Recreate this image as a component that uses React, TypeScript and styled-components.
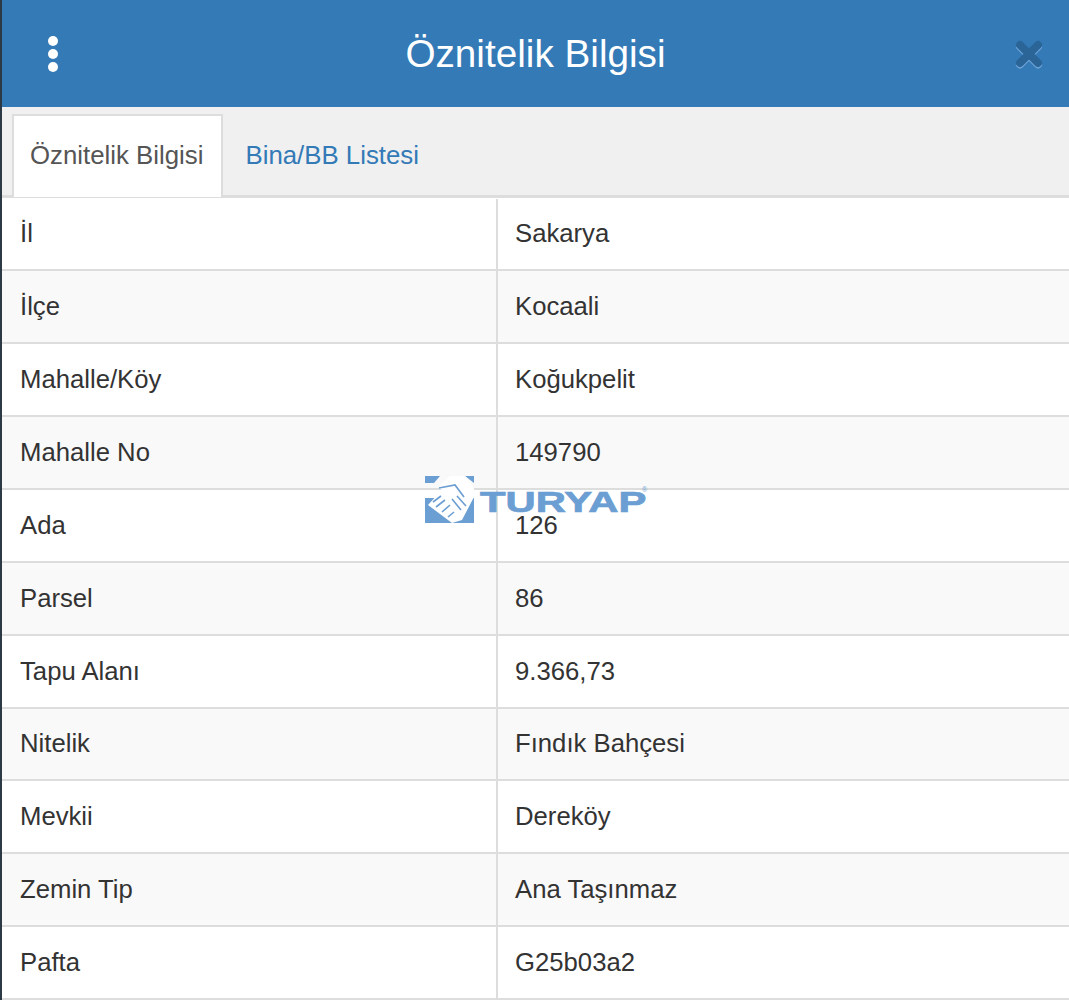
import { createGlobalStyle } from 'styled-components'
import styled from 'styled-components'

const GlobalStyle = createGlobalStyle`
  html, body {
    margin: 0;
    padding: 0;
    background: #fff;
    font-family: 'Liberation Sans', Arial, sans-serif;
  }
`

const Page = styled.div`
  position: relative;
  width: 1069px;
  height: 1000px;
  overflow: hidden;
  box-sizing: border-box;
  border-left: 2px solid #2b3a45;
`

const Header = styled.header`
  height: 107px;
  background: #337ab7;
  display: flex;
  align-items: center;
  justify-content: space-between;
  padding: 0 24px 0 46px;
`

const MenuDots = styled.div`
  display: flex;
  flex-direction: column;
  gap: 3px;
  span {
    width: 10px;
    height: 10px;
    border-radius: 50%;
    background: #fff;
  }
`

const Title = styled.h1`
  margin: 0;
  font-size: 38.7px;
  font-weight: 400;
  color: #fff;
  line-height: 107px;
`

const CloseIcon = styled.svg`
  width: 32px;
  height: 32px;
  display: block;
`

const TabBar = styled.nav`
  height: 88px;
  background: #f0f0f0;
  border-bottom: 3px solid #ddd;
  display: flex;
  align-items: flex-end;
  padding-left: 10px;
  box-sizing: content-box;
`

const Tab = styled.div<{ $active?: boolean }>`
  height: ${({ $active }) => ($active ? '83px' : '80px')};
  box-sizing: border-box;
  padding: 0 18px ${({ $active }) => ($active ? '3px' : '0')} ${({ $active }) => ($active ? '16px' : '6px')};
  margin-bottom: ${({ $active }) => ($active ? '-2px' : '0')};
  display: flex;
  align-items: center;
  font-size: 25.8px;
  color: ${({ $active }) => ($active ? '#555' : '#337ab7')};
  background: ${({ $active }) => ($active ? '#fff' : 'transparent')};
  border: ${({ $active }) => ($active ? '2px solid #ddd' : 'none')};
  border-bottom: none;
  margin-right: ${({ $active }) => ($active ? '16px' : '0')};
`

const Table = styled.div`
  display: flex;
  flex-direction: column;
  padding-top: 0.5px;
`

const Row = styled.div<{ $striped: boolean }>`
  height: 72.87px;
  box-sizing: border-box;
  display: grid;
  grid-template-columns: 494px 1fr;
  background: ${({ $striped }) => ($striped ? '#f9f9f9' : '#fff')};
  border-bottom: 2px solid #ddd;
`

const Cell = styled.div<{ $value?: boolean }>`
  display: flex;
  align-items: center;
  padding-left: ${({ $value }) => ($value ? '17px' : '18px')};
  font-size: 25.7px;
  color: #333;
  border-left: ${({ $value }) => ($value ? '2px solid #ddd' : 'none')};
`

const Logo = styled.div`
  position: absolute;
  left: 423px;
  top: 476px;
  display: flex;
  align-items: center;
  gap: 5px;
`

const LogoText = styled.span`
  font-size: 29px;
  font-weight: 700;
  color: #6b9ed2;
  -webkit-text-stroke: 0.7px #6b9ed2;
  transform: scaleX(1.44);
  transform-origin: left center;
  line-height: 22px;
  margin-top: 4px;
`

const LogoMark = styled.span`
  position: absolute;
  left: 217px;
  top: 10px;
  font-size: 7px;
  line-height: 1;
  color: #6b9ed2;
`

const rows: [string, string][] = [
  ['İl', 'Sakarya'],
  ['İlçe', 'Kocaali'],
  ['Mahalle/Köy', 'Koğukpelit'],
  ['Mahalle No', '149790'],
  ['Ada', '126'],
  ['Parsel', '86'],
  ['Tapu Alanı', '9.366,73'],
  ['Nitelik', 'Fındık Bahçesi'],
  ['Mevkii', 'Dereköy'],
  ['Zemin Tip', 'Ana Taşınmaz'],
  ['Pafta', 'G25b03a2'],
]

const App = () => {
  return (
    <>
      <GlobalStyle />
      <Page>
        <Header>
          <MenuDots>
            <span />
            <span />
            <span />
          </MenuDots>
          <Title>Öznitelik Bilgisi</Title>
          <CloseIcon viewBox="0 0 32 32">
            <path d="M7 7 L25 25 M25 7 L7 25" stroke="#6fa5d8" strokeWidth="8" strokeLinecap="round" transform="translate(0 1.5)" />
            <path d="M7 7 L25 25 M25 7 L7 25" stroke="#2b6496" strokeWidth="8" strokeLinecap="round" />
          </CloseIcon>
        </Header>
        <TabBar>
          <Tab $active>Öznitelik Bilgisi</Tab>
          <Tab>Bina/BB Listesi</Tab>
        </TabBar>
        <Table>
          {rows.map(([label, value], i) => (
            <Row key={label} $striped={i % 2 === 1}>
              <Cell>{label}</Cell>
              <Cell $value>{value}</Cell>
            </Row>
          ))}
        </Table>
        <Logo>
          <svg width="50" height="48" viewBox="0 0 50 48">
            <path d="M0 0 H15 L9 7 H0 Z M40 0 H49 V7 Z M0 22 V47 H49 V22 Z" fill="#6b9ed2" />
            <path d="M3 29 L14 17 L22 18 L13 11 L25 0 H40 L49 12 V21 L37 44 L27 47 Z" fill="#fff" />
            <path d="M8 26 L16 20 M11 31 L20 24 M17 36 L25 29 M23 41 L29 36 M14 12 L30 9 L39 21 M27 23 L36 34 M32 20 L41 30" stroke="#6b9ed2" strokeWidth="1.6" fill="none" />
          </svg>
          <LogoText>TURYAP</LogoText>
          <LogoMark>®</LogoMark>
        </Logo>
      </Page>
    </>
  )
}

export default App
